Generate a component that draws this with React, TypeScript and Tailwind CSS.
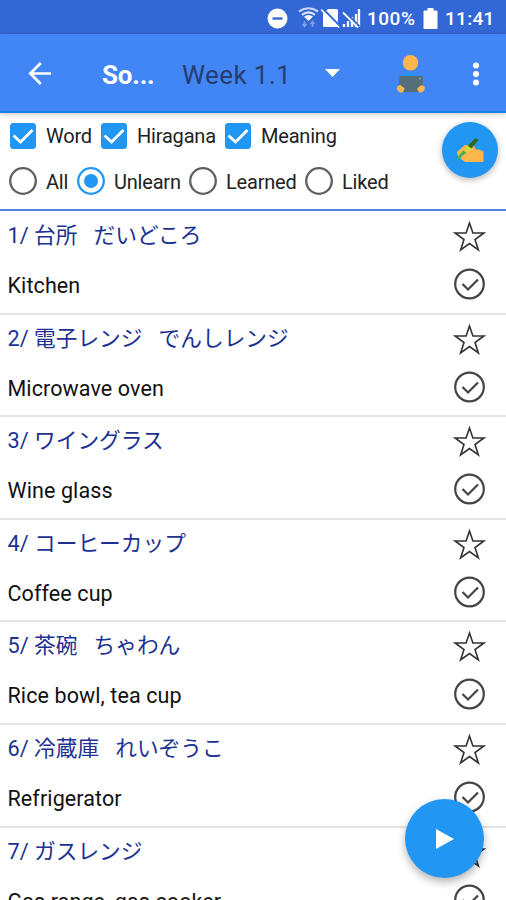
import { useState } from "react";

type Entry = { id: number; word: string; hiragana: string; meaning: string };

const entries: Entry[] = [
  { id: 1, word: "台所", hiragana: "だいどころ", meaning: "Kitchen" },
  { id: 2, word: "電子レンジ", hiragana: "でんしレンジ", meaning: "Microwave oven" },
  { id: 3, word: "ワイングラス", hiragana: "", meaning: "Wine glass" },
  { id: 4, word: "コーヒーカップ", hiragana: "", meaning: "Coffee cup" },
  { id: 5, word: "茶碗", hiragana: "ちゃわん", meaning: "Rice bowl, tea cup" },
  { id: 6, word: "冷蔵庫", hiragana: "れいぞうこ", meaning: "Refrigerator" },
  { id: 7, word: "ガスレンジ", hiragana: "", meaning: "Gas range, gas cooker" },
];

function StatusBar() {
  return (
    <div className="flex h-[34px] shrink-0 items-center bg-[#3367d6] pl-[267px] pt-0.5 text-white">
      <svg width="21" height="21" viewBox="0 0 21 21">
        <circle cx="10.5" cy="10.5" r="10" fill="#fff" />
        <path d="M5.5 10.5h10" stroke="#3367d6" strokeWidth="2.4" />
      </svg>
      <svg className="ml-[10px]" width="21" height="22" viewBox="0 0 21 22" fill="none">
        <path d="M1 4.5Q10.5 -2 20 4.5" stroke="#c9d7f5" strokeWidth="2.2" />
        <path d="M4 7.8Q10.5 3 17 7.8" stroke="#e3ebfa" strokeWidth="2.2" />
        <path d="M6 9.5Q10.5 6.5 15 9.5L10.5 14Z" fill="#fff" />
        <path d="M6.5 14v5M4.5 17l2 2.500 2-2.500M14.500 20v-5.500M12.500 17l2-2.500 2 2.500" stroke="#7fa0e8" strokeWidth="1.6" />
      </svg>
      <svg className="ml-[2px]" width="20" height="20" viewBox="0 0 20 20">
        <path d="M7 1h8.500a1.500 1.500 0 0 1 1.500 1.500V19H3.500A1.500 1.500 0 0 1 2 17.500V6Z" fill="#fff" />
        <path d="M1.5 0.500l18 18" stroke="#3367d6" strokeWidth="2.2" />
        <path d="M0 1.500l18 18" stroke="#fff" strokeWidth="1.7" />
      </svg>
      <svg className="ml-[1px]" width="19" height="20" viewBox="0 0 19 20">
        <path d="M2 19v-3M6 19v-6M10 19V9M14 19V6M17 19V1" stroke="#fff" strokeWidth="2.3" />
        <path d="M2.5 3.500l15 15" stroke="#3367d6" strokeWidth="2.2" />
        <path d="M1 4.500l15 15" stroke="#fff" strokeWidth="1.8" />
      </svg>
      <span className="ml-[6px] w-[50px] whitespace-nowrap text-[19px] font-medium leading-none tracking-[0.5px]">100%</span>
      <svg className="ml-[6px]" width="15" height="21" viewBox="0 0 15 21" fill="#fff">
        <path d="M4.5 0h6v2.5h3a1 1 0 0 1 1 1V20a1 1 0 0 1-1 1h-12a1 1 0 0 1-1-1V3.5a1 1 0 0 1 1-1h3Z" />
      </svg>
      <span className="ml-[7px] whitespace-nowrap text-[19px] font-medium leading-none tracking-[0.3px]">11:41</span>
    </div>
  );
}

function AppBar() {
  return (
    <header className="relative z-10 flex h-[79px] shrink-0 items-center border-b-2 border-[#2080e8] bg-[#4285f4] text-white shadow-[0_1px_5px_rgba(0,0,0,0.25)]">
      <svg className="ml-[28px]" width="24" height="24" viewBox="0 0 24 24" fill="none" stroke="#fff" strokeWidth="2.7">
        <path d="M23 12.5H2.5M12.8 2L2.3 12.5l10.5 10.5" />
      </svg>
      <h1 className="ml-[50px] w-[80px] pt-1 text-[26px] font-bold leading-none tracking-[-0.2px]">So...</h1>
      <span className="w-[143px] whitespace-nowrap pt-1 text-[26px] leading-none tracking-[0.4px] text-[#263d70]">Week 1.1</span>
      <svg className="mt-px" width="15" height="8" viewBox="0 0 15 8" fill="#fff">
        <path d="M0 0h15L7.5 8Z" />
      </svg>
      <svg className="ml-[56px] mt-[3px]" width="30" height="38" viewBox="0 0 30 38">
        <path d="M8 19q6-3 13 0v3H8Z" fill="#2196f3" />
        <circle cx="14.5" cy="7.7" r="7.7" fill="#ffb74d" />
        <rect x="3" y="21" width="24" height="16" rx="1" fill="#546e7a" />
        <circle cx="24" cy="23.5" r="1" fill="#90a4ae" />
        <path d="M1.2 31.5l3-1.5 4.5 3.5-2 4H4Q0 35 1.2 31.5ZM28.5 31.5l-3-1.5-4.5 3.5 2 4h2.5Q30 35 28.5 31.5Z" fill="#ffb74d" />
      </svg>
      <svg className="ml-[46px] mt-[2px]" width="8" height="24" viewBox="0 0 8 24" fill="#fff">
        <circle cx="4" cy="3.5" r="3" />
        <circle cx="4" cy="12" r="3" />
        <circle cx="4" cy="20.5" r="3" />
      </svg>
    </header>
  );
}

function Check({ label, width }: { label: string; width: string }) {
  const [on, setOn] = useState(true);
  return (
    <button onClick={() => setOn(!on)} className={`flex items-center ${width}`}>
      <svg className="shrink-0" width="26" height="26" viewBox="0 0 26 26">
        <rect x="0.5" y="0.5" width="25" height="25" rx="2.5" fill={on ? "#2196f3" : "#fff"} stroke={on ? "#2196f3" : "#666"} />
        <path d="M3.5 12.5l7 6.5L22.5 7" fill="none" stroke="#fff" strokeWidth="2.8" />
      </svg>
      <span className="ml-[10px] whitespace-nowrap text-[20px] leading-none tracking-[-0.2px]">{label}</span>
    </button>
  );
}

function Radio({ label, width, on, onClick }: { label: string; width: string; on: boolean; onClick: () => void }) {
  return (
    <button onClick={onClick} className={`flex items-center ${width}`}>
      <svg className="shrink-0" width="28" height="28" viewBox="0 0 28 28">
        <circle cx="14" cy="14" r="12.8" fill="none" stroke={on ? "#2196f3" : "#5f5f5f"} strokeWidth="2.3" />
        {on && <circle cx="14" cy="14" r="7" fill="#2196f3" />}
      </svg>
      <span className="ml-[9px] whitespace-nowrap pt-px text-[20px] leading-none tracking-[-0.2px]">{label}</span>
    </button>
  );
}

function Filters() {
  const [mode, setMode] = useState("Unlearn");
  return (
    <section className="relative h-[98px] shrink-0 border-b-2 border-[#5080e0] bg-white">
      <div className="flex h-[46px] items-center pl-[10px]">
        <Check label="Word" width="w-[91px]" />
        <Check label="Hiragana" width="w-[124px]" />
        <Check label="Meaning" width="w-[130px]" />
      </div>
      <div className="flex h-[44px] items-center pl-[9px]">
        <Radio label="All" width="w-[68px]" on={mode === "All"} onClick={() => setMode("All")} />
        <Radio label="Unlearn" width="w-[112px]" on={mode === "Unlearn"} onClick={() => setMode("Unlearn")} />
        <Radio label="Learned" width="w-[116px]" on={mode === "Learned"} onClick={() => setMode("Learned")} />
        <Radio label="Liked" width="w-[90px]" on={mode === "Liked"} onClick={() => setMode("Liked")} />
      </div>
      {/* Writing practice button */}
      <button className="absolute right-[8px] top-[9px] flex h-[56px] w-[56px] items-center justify-center rounded-full bg-[#2196f3] shadow-[0_2px_6px_rgba(0,0,0,0.3)]">
        <svg width="28" height="26" viewBox="0 0 28 26">
          <path d="M1 15L9 8h9l1.5 4.5 2-.5 6 2.500V25H9.500L5 22l-3-3Z" fill="#ffb74d" />
          <path d="M19.5 1l3 2-7 8.500-4.500-2Z" fill="#33691e" />
          <path d="M9.500 10l2-1.500 4 3-3 3.500-3.500-1.500Z" fill="#cddc39" />
          <path d="M7 13.500l4 2.500-4.500 4-5 4 1-5Z" fill="#4caf50" />
          <path d="M1.500 16.500l8-7M5.500 20.500l7-5" stroke="#ffb74d" strokeWidth="2" />
        </svg>
      </button>
    </section>
  );
}

function Row({ entry }: { entry: Entry }) {
  return (
    <li className="flex h-[102.6px] shrink-0 justify-between border-b-2 border-[#e4e4e4] pl-[7.5px] pr-[20px]">
      <div className="whitespace-pre">
        <p className="h-[48px] text-[21.7px] leading-[47px] text-[#1c3190]">
          {entry.id}/ {entry.word}
          {entry.hiragana && "   " + entry.hiragana}
        </p>
        <p className="h-[49px] text-[21.5px] leading-[51px] tracking-[0.1px] text-[#111]">{entry.meaning}</p>
      </div>
      <div className="flex flex-col items-center pt-[8px]">
        <svg width="33" height="33" viewBox="0 0 33 33" fill="none" stroke="#333" strokeWidth="1.6">
          <path d="M16.5 3l3.400 10h11l-8.900 6.500 3.400 10.500-8.900-6.400-8.900 6.400L11 19.500 2.100 13h11Z" />
        </svg>
        <svg className="mt-[15px]" width="33" height="32" viewBox="0 0 33 32" fill="none" stroke="#444">
          <circle cx="16.5" cy="16" r="14.3" strokeWidth="2.2" />
          <path d="M9.5 16l5.500 5.500L25 11.500" strokeWidth="2.2" />
        </svg>
      </div>
    </li>
  );
}

export default function App() {
  return (
    <div className="relative flex h-[900px] w-[506px] flex-col overflow-hidden bg-white font-[Roboto,'Noto_Sans_CJK_JP',sans-serif] text-[#222]">
      <StatusBar />
      <AppBar />
      <Filters />
      <ul className="flex min-h-0 flex-1 flex-col overflow-hidden pt-px">
        {entries.map((entry) => (
          <Row key={entry.id} entry={entry} />
        ))}
      </ul>
      <button className="absolute bottom-[22px] right-[22px] flex h-[79px] w-[79px] items-center justify-center rounded-full bg-[#2196f3] shadow-[0_4px_9px_rgba(0,0,0,0.3)]">
        <svg width="18" height="20" viewBox="0 0 18 20" fill="#fff">
          <path d="M0 0l18 10L0 20Z" />
        </svg>
      </button>
    </div>
  );
}
